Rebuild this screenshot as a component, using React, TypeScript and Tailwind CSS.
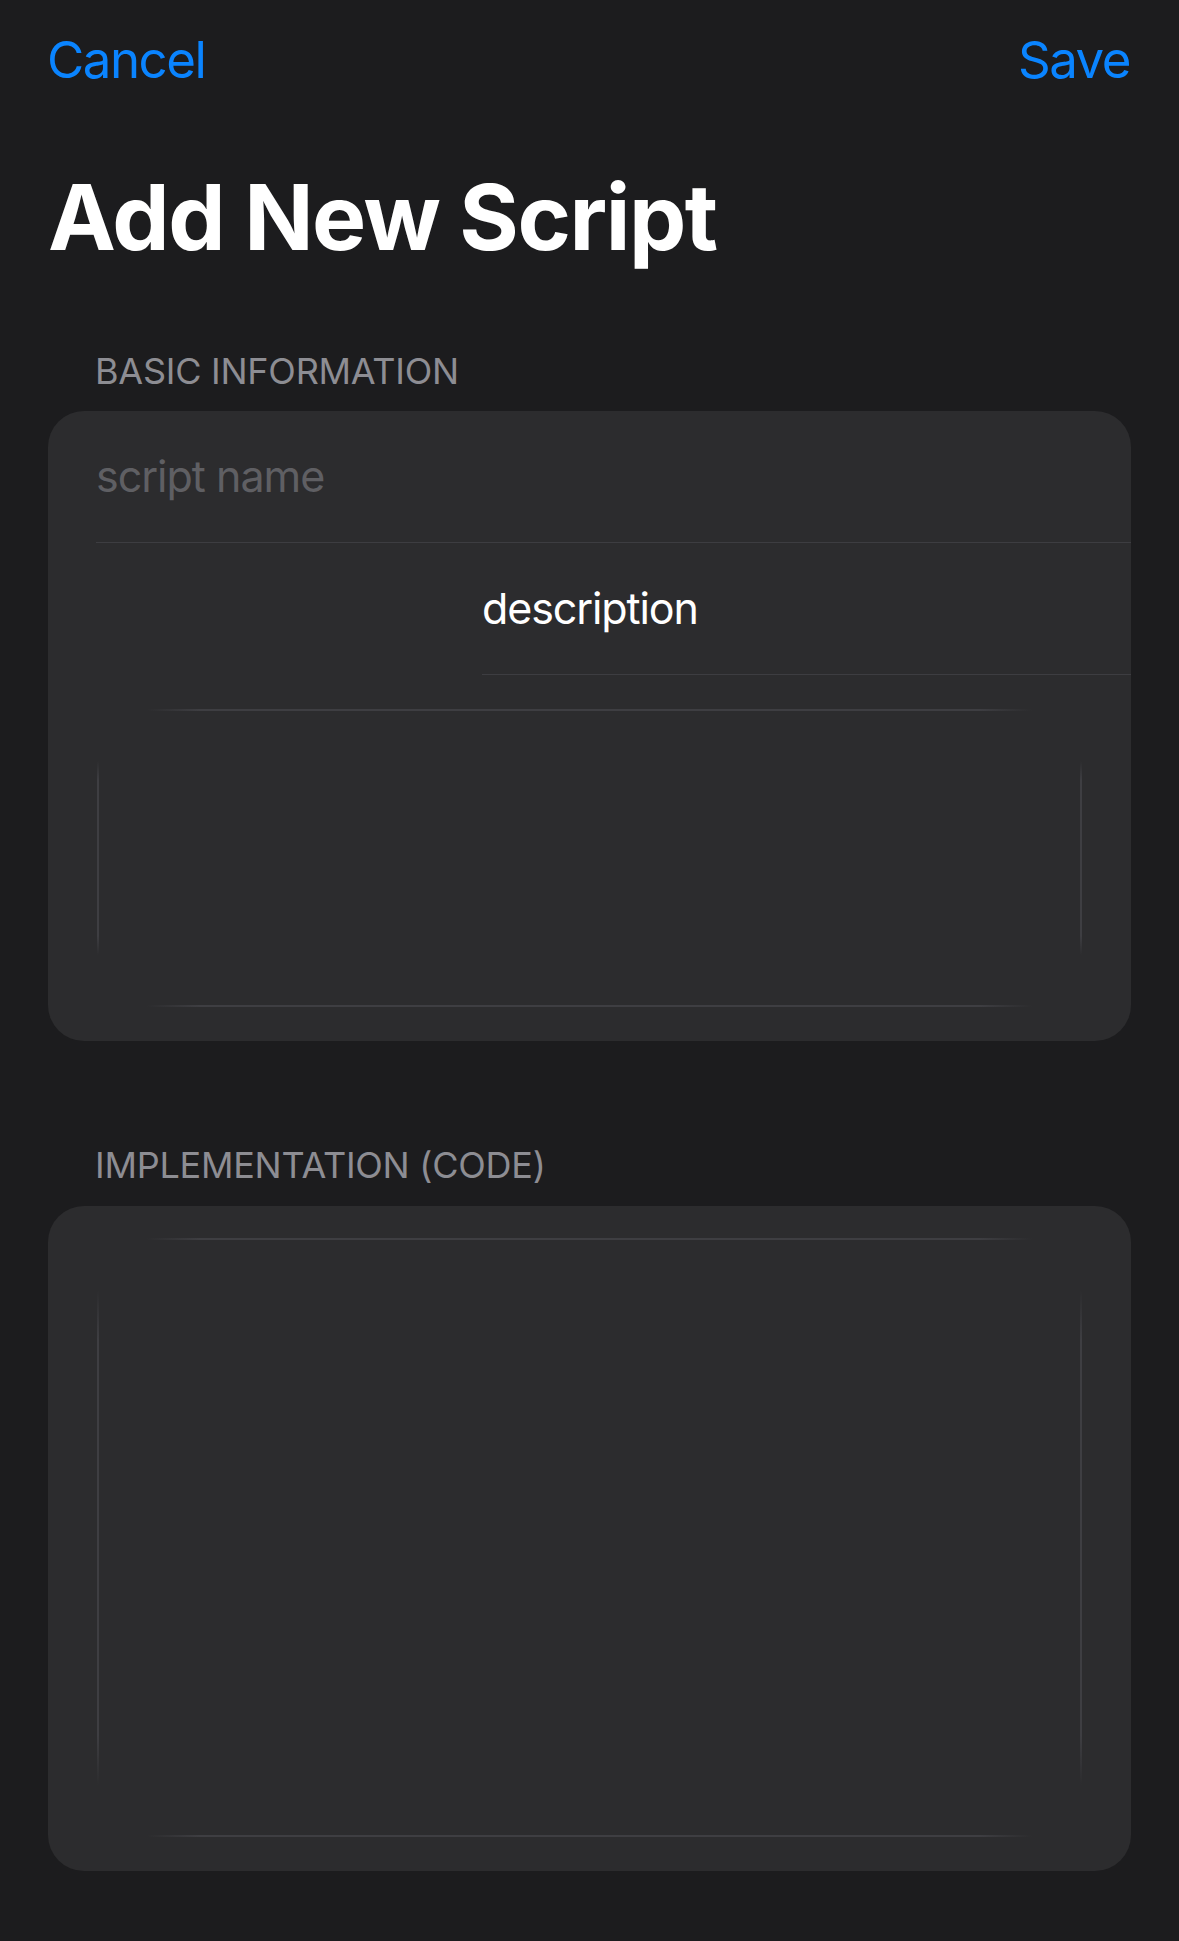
import React from 'react';

const font = { fontFamily: 'Inter, "Noto Sans", sans-serif' };

// Bordered editor area whose corners are left open, like the SwiftUI TextEditor frame
const EditorFrame: React.FC<{ height: string }> = ({ height }) => (
  <div className={`flex flex-col ${height}`}>
    <div className="mx-[50px] h-[2px] bg-[linear-gradient(to_right,transparent,#3e3e42_6%,#3e3e42_94%,transparent)]" />
    <div className="flex flex-1 justify-between py-[50px]">
      <div className="w-[2px] bg-[linear-gradient(to_bottom,transparent,#3e3e42_10%,#3e3e42_90%,transparent)]" />
      <div className="w-[2px] bg-[linear-gradient(to_bottom,transparent,#3e3e42_10%,#3e3e42_90%,transparent)]" />
    </div>
    <div className="mx-[50px] h-[2px] bg-[linear-gradient(to_right,transparent,#3e3e42_6%,#3e3e42_94%,transparent)]" />
  </div>
);

const SectionHeader: React.FC<{ title: string }> = ({ title }) => (
  <div className="pl-[95px] text-[36px] leading-[36px] tracking-[-0.25px] text-[#8d8d93]">{title}</div>
);

export default function App() {
  return (
    <div className="min-h-[1941px] w-full bg-[#1c1c1e] text-white" style={font}>
      {/* Nav bar */}
      <div className="flex items-center justify-between pl-[47px] pr-[49px] pt-[34px] text-[51px] leading-[51px] tracking-[-1.5px] text-[#0a84ff]">
        <button>Cancel</button>
        <button>Save</button>
      </div>

      <h1 className="mt-[87px] pl-[48px] text-[91px] font-bold leading-[91px] tracking-[-1.5px]">Add New Script</h1>

      <div className="mt-[90px]">
        <SectionHeader title="BASIC INFORMATION" />
        <div className="mx-[48px] mt-[22px] rounded-[36px] bg-[#2c2c2e]">
          <div className="ml-[48px] flex h-[132px] items-center border-b border-[#3d3d41] text-[43px] leading-[43px] tracking-[-1px] text-[#5f5f63]">
            script name
          </div>
          <div className="ml-[434px] flex h-[132px] items-center border-b border-[#3d3d41] text-[43px] leading-[43px] tracking-[-1.1px] text-white">
            description
          </div>
          <div className="px-[49px] pb-[34px] pt-[34px]">
            <EditorFrame height="h-[298px]" />
          </div>
        </div>
      </div>

      <div className="mt-[106px]">
        <SectionHeader title="IMPLEMENTATION (CODE)" />
        <div className="mx-[48px] mt-[23px] rounded-[36px] bg-[#2c2c2e] px-[49px] pb-[34px] pt-[32px]">
          <EditorFrame height="h-[599px]" />
        </div>
      </div>
    </div>
  );
}
